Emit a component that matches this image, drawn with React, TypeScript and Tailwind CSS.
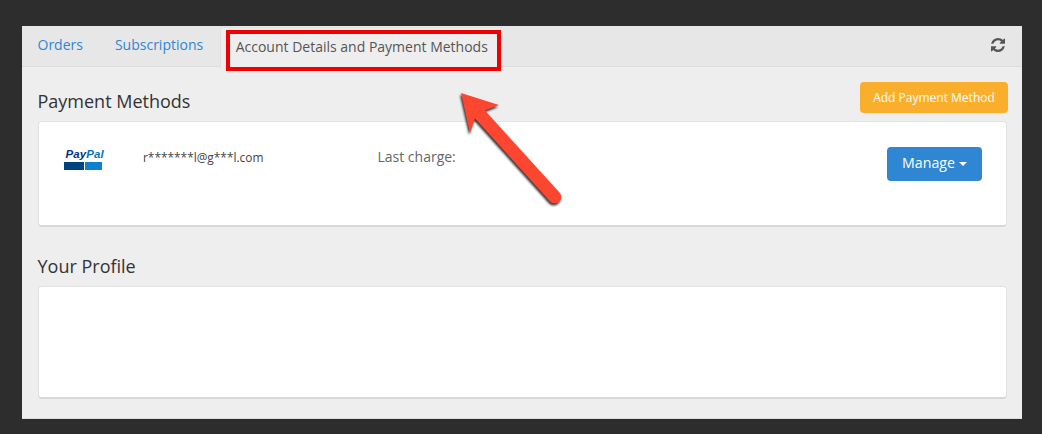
import React from "react";

function Paypal() {
  return (
    <div className="flex flex-col items-start w-[38px]">
      <div className="ml-[1.500px] whitespace-nowrap font-['Liberation_Sans',sans-serif] italic font-bold text-[11.500px] leading-[11px] tracking-[0.1px]">
        <span className="text-[#003087]">Pay</span>
        <span className="text-[#0a70ba]">Pal</span>
      </div>
      <div className="flex gap-[1px] mt-[2px] w-[38px] h-[8px]">
        <div className="w-[20px] bg-[#00437f]" />
        <div className="w-[17px] bg-[#0f7fce]" />
      </div>
    </div>
  );
}

function Refresh() {
  return (
    <svg width="14" height="14" viewBox="0 0 1536 1536" className="fill-[#555]">
      <path d="M1511 928q0 5-1 7-64 268-268 434.5T764 1536q-146 0-282.500-55T238 1324l-129 129q-19 19-45 19t-45-19-19-45V960q0-26 19-45t45-19h448q26 0 45 19t19 45-19 45l-137 137q71 66 161 102t187 36q134 0 250-65t186-179q11-17 53-117 8-23 30-23h192q13 0 22.500 9.500t9.500 22.500zm25-800v448q0 26-19 45t-45 19h-448q-26 0-45-19t-19-45 19-45l138-138Q969 256 768 256q-134 0-250 65T332 500q-11 17-53 117-8 23-30 23H50q-13 0-22.500-9.500T18 608v-7q65-268 270-434.500T768 0q146 0 284 55.500T1297 212l130-129q19-19 45-19t45 19 19 45z" />
    </svg>
  );
}

export default function App() {
  return (
    <div className="relative w-[1042px] h-[434px] bg-[#2d2d2d] pt-[26px] pl-[22px] overflow-hidden font-['Open_Sans',sans-serif]">
      <div className="w-[1000px] h-[393px] bg-[#eeeeee] border-b border-[#dcdcdc] flex flex-col">
        <div className="h-[41px] bg-[#e7e7e7] border-b border-[#dcdcdc] flex items-start relative shrink-0">
          <a className="pl-[15.500px] pr-[16px] pt-[9px] text-[14px] leading-[20px] text-[#2f86d2]">Orders</a>
          <a className="pl-[16px] pr-[18px] pt-[9px] text-[14px] leading-[20px] text-[#2f86d2]">Subscriptions</a>
          <div className="h-[41px] w-[282px] ml-[-1px] mt-[1px] pl-[14.500px] pt-[9px] bg-[#eeeeee] border border-b-0 border-[#e0e0e0] rounded-t-[3px] text-[14px] leading-[20px] text-[#555]">
            Account Details and Payment Methods
          </div>
          <div className="ml-auto mr-[17px] mt-[12px]">
            <Refresh />
          </div>
        </div>
        <div className="pl-[16px] pr-[15px] flex flex-col">
          <div className="flex justify-between items-start h-[54px]">
            <h2 className="mt-[21px] ml-[-0.500px] text-[18px] leading-[26px] text-[#333]">Payment Methods</h2>
            <button className="mt-[15px] mr-[-1px] w-[148px] h-[31px] bg-[#faaf2c] rounded-[4px] text-white text-[12px] leading-[31px] text-center">
              Add Payment Method
            </button>
          </div>
          <div className="h-[106px] bg-white rounded-[4px] border border-[#e2e2e2] border-b-2 border-b-[#d8d8d8] flex items-start relative">
            <div className="ml-[25px] mt-[27px]">
              <Paypal />
            </div>
            <div className="ml-[41px] mt-[27px] text-[11.900px] leading-[16px] text-[#444]">r*******l@g***l.com</div>
            <div className="ml-[114px] mt-[25px] text-[14px] leading-[20px] text-[#666]">Last charge:</div>
            <button className="ml-auto mr-[24px] mt-[25px] w-[95px] h-[34px] bg-[#2f86d2] rounded-[4px] text-white text-[14.200px] leading-[32px] flex items-center justify-center gap-[4px]">
              <span className="mt-[-2px]">Manage</span>
              <span className="w-0 h-0 border-x-[4px] border-x-transparent border-t-[4px] border-t-white" />
            </button>
          </div>
          <h2 className="mt-[26px] ml-[-0.500px] text-[18px] leading-[26px] text-[#333]">Your Profile</h2>
          <div className="mt-[7px] h-[113px] bg-white rounded-[4px] border border-[#e2e2e2] border-b-2 border-b-[#d8d8d8]" />
        </div>
      </div>

      <div className="absolute left-[226px] top-[30px] w-[275px] h-[41px] border-[4px] border-[#f00000]" />
      <svg className="absolute left-[450px] top-[85px]" width="125" height="130" viewBox="0 0 125 130">
        <g transform="translate(-450 -85)" className="[filter:drop-shadow(-1px_2px_1px_rgba(0,0,0,0.8))]">
          <path
            d="M461 93 L499 105 L485 110.500 L559.500 192.500 A6.500 6.500 0 0 1 550 201.500 L475 118.500 L470 133 Z"
            fill="#fd4630"
          />
        </g>
      </svg>
    </div>
  );
}
